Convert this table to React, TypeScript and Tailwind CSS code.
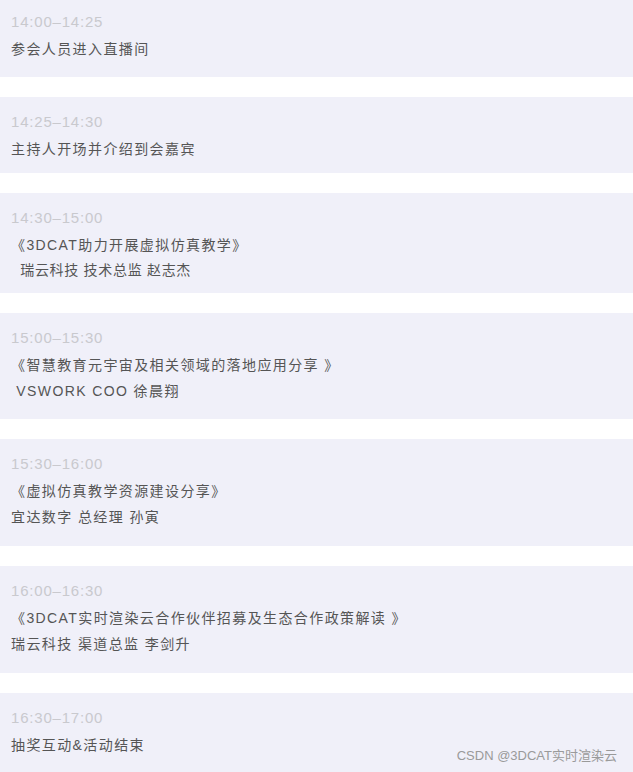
type Item = {
  time: string;
  lines: string[];
  pad: string;
  nameSmall?: boolean;
};

const ITEMS: Item[] = [
  { time: "14:00–14:25", lines: ["参会人员进入直播间"], pad: "pt-[10px] pb-[15px]" },
  { time: "14:25–14:30", lines: ["主持人开场并介绍到会嘉宾"], pad: "pt-[13px] pb-[11px]" },
  {
    time: "14:30–15:00",
    lines: ["《3DCAT助力开展虚拟仿真教学》", "  瑞云科技 技术总监 赵志杰"],
    pad: "pt-[13px] pb-[11px]",
    nameSmall: true,
  },
  {
    time: "15:00–15:30",
    lines: ["《智慧教育元宇宙及相关领域的落地应用分享 》", " VSWORK COO 徐晨翔"],
    pad: "pt-[13px] pb-[15px]",
  },
  {
    time: "15:30–16:00",
    lines: ["《虚拟仿真教学资源建设分享》", "宜达数字 总经理 孙寅"],
    pad: "pt-[13px] pb-[16px]",
  },
  {
    time: "16:00–16:30",
    lines: ["《3DCAT实时渲染云合作伙伴招募及生态合作政策解读 》", "瑞云科技 渠道总监 李剑升"],
    pad: "pt-[13px] pb-[16px]",
  },
  { time: "16:30–17:00", lines: ["抽奖互动&活动结束"], pad: "pt-[13px] pb-[20px]" },
];

function Block({ item }: { item: Item }) {
  return (
    <section className={`bg-[#f0f0f9] pl-[11px] pr-4 ${item.pad}`}>
      <p className="mb-[2px] text-[15px] leading-[24px] tracking-[0.8px] text-[#c9c9ce]">{item.time}</p>
      {item.lines.map((line, i) =>
        item.nameSmall && i === 1 ? (
          <p key={i} className="whitespace-pre text-[14px] leading-[24px] tracking-[0.7px] text-[#555555]">
            {line}
          </p>
        ) : (
          <p key={i} className="whitespace-pre text-[14px] leading-[26px] tracking-[1.4px] text-[#555555]">
            {line}
          </p>
        )
      )}
    </section>
  );
}

export default function App() {
  return (
    <main
      className="relative h-[772px] w-[633px] overflow-hidden bg-white"
      style={{ fontFamily: '"Liberation Sans", "Noto Sans CJK SC", sans-serif' }}
    >
      <div className="flex flex-col gap-5">
        {ITEMS.map((item) => (
          <Block key={item.time} item={item} />
        ))}
      </div>

      <span className="absolute bottom-[7px] right-[16px] text-[13px] leading-[18px] text-[#9a9a9a]">
        CSDN @3DCAT实时渲染云
      </span>
    </main>
  );
}
